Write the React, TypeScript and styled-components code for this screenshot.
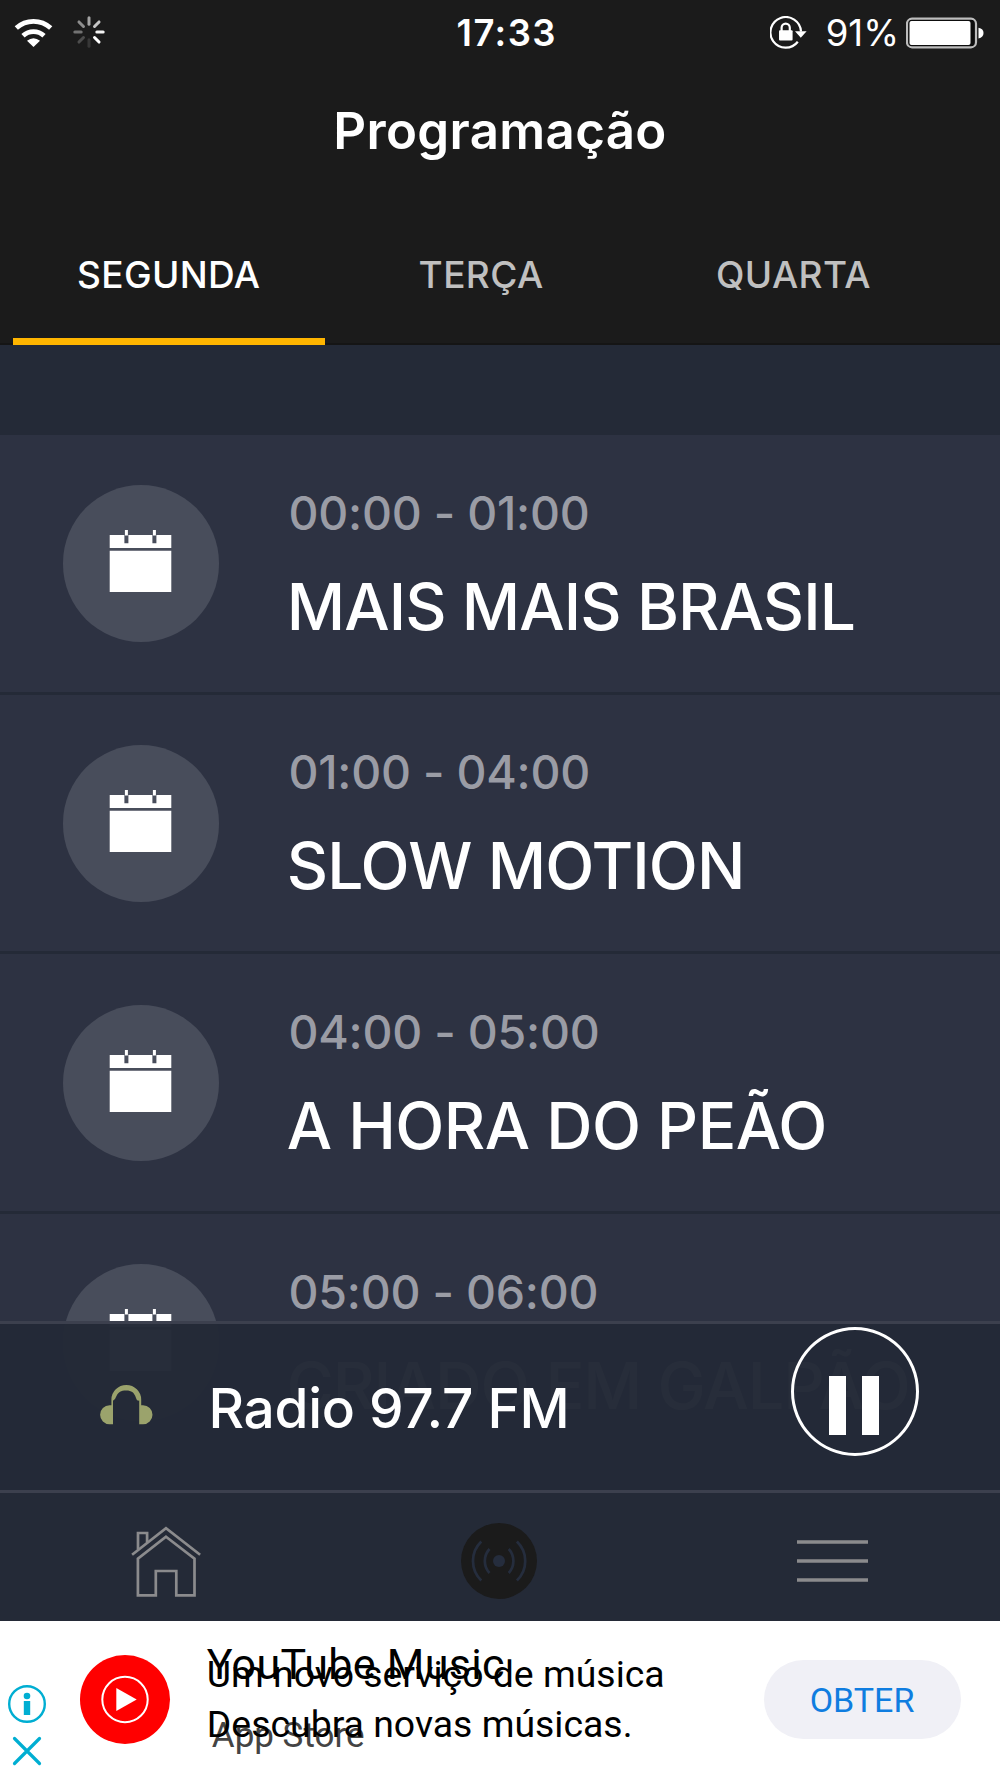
import React from "react";
import styled, { createGlobalStyle } from "styled-components";

const color = {
  header: "#1b1b1b",
  strip: "#242a37",
  row: "#2d3242",
  line: "#3c404e",
  badge: "#484d5b",
  time: "#9a9ca5",
  accent: "#ffb500",
  olive: "#9ba36c",
  navIcon: "#8b8b8d",
  ad: "#00aed2",
};

const GlobalStyle = createGlobalStyle`
  * { box-sizing: border-box; }
  body { margin: 0; background: ${color.strip}; }
`;

const Screen = styled.div`
  width: 1000px;
  height: 1778px;
  display: flex;
  flex-direction: column;
  overflow: hidden;
  background: ${color.strip};
  color: #fff;
  font-family: Inter, "Liberation Sans", sans-serif;
  white-space: nowrap;

  svg { display: block; flex: none; }
`;

/* Header */

const Header = styled.header`
  flex: none;
  height: 344.6px;
  background: ${color.header};
  border-bottom: 2px solid #151515;
`;

const StatusBar = styled.div`
  display: grid;
  grid-template-columns: 1fr auto 1fr;
  align-items: center;
  height: 64px;
  padding: 0 16px 0 14px;
  font-size: 36.5px;
  line-height: 64px;
`;

const StatusLeft = styled.div`
  display: flex;
  align-items: center;
  gap: 19px;
`;

const Clock = styled.time`
  padding: 1px 0 0 15.5px;
  font-weight: 600;
  letter-spacing: 1.4px;
`;

const StatusRight = styled.div`
  display: flex;
  align-items: center;
  justify-content: flex-end;
`;

const BatteryLevel = styled.span`
  margin: 0 7px 0 19px;
  padding-top: 1px;
  letter-spacing: 0;
`;

const Title = styled.h1`
  margin: 0;
  height: 132px;
  padding-top: 1px;
  line-height: 132px;
  text-align: center;
  font-size: 51px;
  font-weight: 600;
  letter-spacing: 0.33px;
`;

const Tabs = styled.nav`
  display: flex;
  height: 149px;
  padding-left: 12.5px;
`;

const Tab = styled.button<{ $active?: boolean }>`
  width: 312.4px;
  height: 149px;
  margin: 0;
  padding: 16px 0 0;
  border: 0;
  border-bottom: 7.6px solid ${(p) => (p.$active ? color.accent : "transparent")};
  background: none;
  color: ${(p) => (p.$active ? "#fff" : "#c0c0c0")};
  font: 450 37px/126px Inter, sans-serif;
  letter-spacing: 0.4px;
`;

/* Schedule */

const Schedule = styled.main`
  flex: none;
  height: 1145.4px;
  padding-top: 90.4px;
  overflow: hidden;
`;

const Row = styled.article`
  display: flex;
  align-items: flex-start;
  height: 259.67px;
  padding-left: 62.6px;
  background: ${color.row};
  border-bottom: 3px solid ${color.strip};
`;

const Badge = styled.div`
  flex: none;
  width: 156.5px;
  height: 156.5px;
  margin-top: 50.4px;
  border-radius: 50%;
  background: ${color.badge};
`;

const RowText = styled.div`
  margin-left: 67.6px;
`;

const Hours = styled.p`
  margin: 47.8px 0 0;
  padding-left: 1.8px;
  color: ${color.time};
  font-size: 46.5px;
  font-weight: 450;
  line-height: 60px;
  letter-spacing: -0.22px;
`;

const ShowName = styled.h2<{ $tracking: number }>`
  margin: 23.8px 0 0;
  font-size: 64px;
  font-weight: 500;
  line-height: 80px;
  letter-spacing: ${(p) => p.$tracking}px;
`;

/* Player */

const Player = styled.section`
  position: relative;
  flex: none;
  display: flex;
  align-items: flex-start;
  height: 169.2px;
  margin-top: -169.2px;
  padding: 0 81.2px 0 100px;
  border-top: 3px solid ${color.line};
  background: rgba(36, 42, 55, 0.984);
  background-clip: padding-box;
`;

const HeadphonesSlot = styled.div`
  margin-top: 61px;
`;

const Station = styled.p`
  margin: 44px auto 0 55.5px;
  font-size: 55px;
  font-weight: 500;
  line-height: 80px;
  letter-spacing: -0.3px;
`;

const PauseButton = styled.button`
  display: flex;
  align-items: flex-start;
  justify-content: center;
  gap: 16px;
  width: 128px;
  height: 129px;
  margin: 3px 0 0;
  padding: 46px 1px 0 0;
  border: 3.5px solid #fff;
  border-radius: 50%;
  background: none;
`;

const PauseBar = styled.i`
  width: 17px;
  height: 59px;
  background: #fff;
`;

/* Bottom navigation */

const BottomNav = styled.nav`
  flex: none;
  display: grid;
  grid-template-columns: repeat(3, 1fr);
  place-items: center;
  height: 131px;
  padding: 8px 1.4px 0 0;
  border-top: 3px solid ${color.line};
  background: ${color.strip};
`;

/* Advertisement */

const Ad = styled.aside`
  flex: none;
  display: flex;
  align-items: flex-start;
  height: 157px;
  padding-left: 7.5px;
  background: #fff;
  color: #000;
  font-family: Roboto, sans-serif;
`;

const AdControls = styled.div`
  display: flex;
  flex-direction: column;
  align-items: center;
  gap: 13px;
  width: 38px;
  margin-top: 64px;
`;

const AdLogo = styled.div`
  margin: 34.5px 0 0 34px;
`;

const AdCopy = styled.div`
  display: grid;
  margin: 12.8px 0 0 36.3px;
  width: 460px;
`;

const AdLayer = styled.div<{ $top?: number }>`
  grid-area: 1 / 1;
  padding-top: ${(p) => p.$top ?? 0}px;
`;

const AdHeadline = styled.p`
  margin: 0;
  font-size: 43px;
  line-height: 60px;
  letter-spacing: 0.3px;
`;

const AdStore = styled.p`
  margin: 22.4px 0 0 5px;
  color: #444;
  font-size: 35px;
  line-height: 40px;
`;

const AdDescription = styled.p`
  margin: 0;
  font-size: 37.4px;
  line-height: 50.3px;
`;

const AdButton = styled.button`
  width: 197px;
  height: 79px;
  margin: 39px 39px 0 auto;
  padding: 0 1px 0 0;
  border: 0;
  border-radius: 40px;
  background: #f0f0f6;
  color: #0f7de0;
  font: 400 34px/80px Roboto, sans-serif;
`;

/* Icons */

const WifiIcon = () => (
  <svg width="39" height="30" viewBox="14 16.5 39 30" fill="none" stroke="#fff" strokeWidth="4.8">
    <path d="M16.3 26.5A25.5 25.5 0 0 1 50.7 26.5" />
    <path d="M23 34.2A15.5 15.5 0 0 1 44 34.2" />
    <path d="M27 39.3Q33.5 34 40 39.3L33.5 45.5Z" fill="#fff" stroke="none" />
  </svg>
);

const spokes = [0.6, 0.75, 0.95, 1, 0.12, 0.22, 0.38, 0.5];

const SpinnerIcon = () => (
  <svg width="33" height="33" viewBox="-17 -16 33 33" stroke="#fff" strokeWidth="3" strokeLinecap="round">
    {spokes.map((opacity, i) => (
      <path key={i} d="M0 -7.8V-14.2" opacity={opacity} transform={`rotate(${i * 45})`} />
    ))}
  </svg>
);

const RotationLockIcon = () => (
  <svg width="37" height="34" viewBox="770 15 37 34" fill="none" stroke="#fff" strokeWidth="2.2">
    <path d="M801 30.5A15.3 15.3 0 1 0 797.8 40.8" />
    <path d="M795 30.2H806.6L800.8 36.8Z" fill="#fff" stroke="none" />
    <rect x="779" y="29.3" width="13.6" height="10.2" rx="1" fill="#fff" stroke="none" />
    <path d="M781.6 30V26.8A4.1 4.1 0 0 1 789.8 26.8V30" />
  </svg>
);

const BatteryIcon = () => (
  <svg width="78" height="32" viewBox="906 16.3 78 32">
    <rect x="907" y="18" width="69" height="28.6" rx="5" fill="#0d0d0d" stroke="#bdbdbd" strokeWidth="2.2" />
    <rect x="909.5" y="20.3" width="61" height="24" rx="2" fill="#fff" />
    <path d="M978.5 27Q983.5 28 983.5 32.3T978.5 37.8Z" fill="#fff" />
  </svg>
);

const CalendarIcon = () => (
  <svg width="156.5" height="156.5" viewBox="62.5 485.2 156.5 156.5">
    <path fill="#fff" d="M109.2 535.3H170.8V548.3H109.2ZM109.2 551H170.8V592.2H109.2Z" />
    <path fill={color.badge} d="M123.9 535.3H127.9V543.5H123.9ZM151.9 535.3H155.9V543.5H151.9Z" />
    <path fill="#fff" d="M124.4 530.3H127.4V535.8H124.4ZM152.4 530.3H155.4V535.8H152.4Z" />
  </svg>
);

const HeadphonesIcon = () => (
  <svg width="53" height="40" viewBox="100 1385 53 40" fill={color.olive}>
    <path d="M113 1405.3V1424.3H109.6A9.5 9.5 0 0 1 109.6 1405.3H111.4V1399.6A14.9 14.6 0 0 1 141.2 1399.6V1405.3H143A9.5 9.5 0 0 1 143 1424.3H139.2V1400.5C134.5 1402 137.8 1390.4 126.3 1390.4S117.8 1398.5 113 1400.5Z" />
  </svg>
);

const HomeIcon = () => (
  <svg width="70" height="72" viewBox="131.5 1525 70 72" fill="none" stroke={color.navIcon} strokeWidth="2.7">
    <path d="M132.6 1554.8L166.5 1528.2L200.6 1554.8" />
    <path d="M138.5 1549.5V1533H147.6V1542.5" />
    <path d="M166.5 1536.8L195 1558.6V1595.3H176.8V1571H156.3V1595.3H138.4V1558.6Z" />
  </svg>
);

const BroadcastIcon = () => (
  <svg width="76" height="76" viewBox="461 1523 76 76" fill="none" stroke="#252d3d" strokeWidth="2.7">
    <circle cx="499" cy="1561" r="38" fill={color.header} stroke="none" />
    <circle cx="499" cy="1561" r="6" fill="#252d3d" stroke="none" />
    <path d="M489.5 1549A17.7 17.7 0 0 0 489.5 1573M481.3 1541.5A27 27 0 0 0 481.3 1580.5" />
    <path d="M508.7 1549A17.7 17.7 0 0 1 508.7 1573M516.9 1541.5A27 27 0 0 1 516.9 1580.5" />
  </svg>
);

const MenuIcon = () => (
  <svg width="71" height="44" viewBox="0 0 71 44" stroke={color.navIcon} strokeWidth="3.4">
    <path d="M0 3H71M0 22H71M0 41H71" />
  </svg>
);

const InfoIcon = () => (
  <svg width="38" height="38" viewBox="-19 -19 38 38" fill={color.ad}>
    <circle r="17.8" fill="none" stroke={color.ad} strokeWidth="2.4" />
    <circle cy="-8" r="3.3" />
    <rect x="-3.2" y="-3" width="6.4" height="14" />
  </svg>
);

const CloseIcon = () => (
  <svg width="30" height="30" viewBox="0 0 30 30" stroke={color.ad} strokeWidth="3.2" strokeLinecap="round">
    <path d="M2.5 2.5L27.5 27.5M27.5 2.5L2.5 27.5" />
  </svg>
);

const MusicLogo = () => (
  <svg width="91" height="89" viewBox="-45 -44.5 91 89">
    <ellipse rx="45" ry="44.4" fill="#f00" />
    <circle r="22.7" fill="none" stroke="#fff" strokeWidth="2" />
    <path d="M-8.7 -11.6L11.7 0L-8.7 11.6Z" fill="#fff" />
  </svg>
);

const shows = [
  { hours: "00:00 - 01:00", name: "MAIS MAIS BRASIL", tracking: -0.9 },
  { hours: "01:00 - 04:00", name: "SLOW MOTION", tracking: -0.9 },
  { hours: "04:00 - 05:00", name: "A HORA DO PEÃO", tracking: -0.5 },
  { hours: "05:00 - 06:00", name: "CRIADO EM GALPÃO", tracking: -0.65 },
];

const days = ["SEGUNDA", "TERÇA", "QUARTA"];

export default function App() {
  return (
    <Screen>
      <GlobalStyle />
      <Header>
        <StatusBar>
          <StatusLeft>
            <WifiIcon />
            <SpinnerIcon />
          </StatusLeft>
          <Clock>17:33</Clock>
          <StatusRight>
            <RotationLockIcon />
            <BatteryLevel>91%</BatteryLevel>
            <BatteryIcon />
          </StatusRight>
        </StatusBar>
        <Title>Programação</Title>
        <Tabs>
          {days.map((day, i) => (
            <Tab key={day} $active={i === 0}>{day}</Tab>
          ))}
        </Tabs>
      </Header>

      <Schedule>
        {shows.map((show) => (
          <Row key={show.hours}>
            <Badge><CalendarIcon /></Badge>
            <RowText>
              <Hours>{show.hours}</Hours>
              <ShowName $tracking={show.tracking}>{show.name}</ShowName>
            </RowText>
          </Row>
        ))}
      </Schedule>

      <Player>
        <HeadphonesSlot><HeadphonesIcon /></HeadphonesSlot>
        <Station>Radio 97.7 FM</Station>
        <PauseButton aria-label="Pausar">
          <PauseBar />
          <PauseBar />
        </PauseButton>
      </Player>

      <BottomNav>
        <HomeIcon />
        <BroadcastIcon />
        <MenuIcon />
      </BottomNav>

      <Ad>
        <AdControls>
          <InfoIcon />
          <CloseIcon />
        </AdControls>
        <AdLogo><MusicLogo /></AdLogo>
        <AdCopy>
          <AdLayer>
            <AdHeadline>YouTube Music</AdHeadline>
            <AdStore>App Store</AdStore>
          </AdLayer>
          <AdLayer $top={15}>
            <AdDescription>Um novo serviço de música</AdDescription>
            <AdDescription>Descubra novas músicas.</AdDescription>
          </AdLayer>
        </AdCopy>
        <AdButton>OBTER</AdButton>
      </Ad>
    </Screen>
  );
}
